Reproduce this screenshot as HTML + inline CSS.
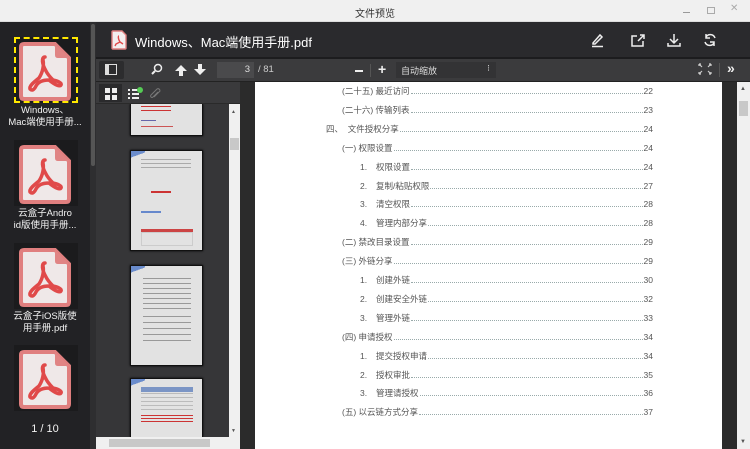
<!DOCTYPE html>
<html><head><meta charset="utf-8">
<style>
*{margin:0;padding:0;box-sizing:border-box}
body{width:750px;height:449px;overflow:hidden;background:#2a2a2c;font-family:"Liberation Sans","Noto Sans CJK SC",sans-serif;position:relative}
.a{position:absolute}
.row{position:absolute;display:flex;align-items:flex-end;font-size:8.5px;color:#555;white-space:nowrap;line-height:10px;height:10px}
.row .d{flex:1;border-bottom:1px dotted #9aa;margin:0 1px 2px 1px;height:1px}
.lbl{position:absolute;width:90px;left:0;text-align:center;color:#f2f2f2;font-size:9.5px;line-height:11.5px}
.pg{position:absolute;left:130px;width:73px;background:#e2e2e2;border:1px solid #111;box-shadow:0 0 2px #000;overflow:hidden}
.tile{position:absolute;left:14px;width:64px;height:66px;background:#1b1b1d}
</style></head><body>
<div class="a" style="left:0;top:0;width:750px;height:22px;background:#f0f0f0;border-bottom:1px solid #ddd"></div>
<div class="a" style="left:0;top:5px;width:750px;text-align:center;font-size:10px;color:#333">文件预览</div>
<div class="a" style="left:683px;top:12px;width:7px;height:1px;background:#999"></div>
<div class="a" style="left:707px;top:7px;width:8px;height:7px;border:1px solid #aaa"></div>
<div class="a" style="left:730px;top:3px;font-size:10px;color:#aaa">✕</div>

<div class="a" style="left:0;top:22px;width:90px;height:427px;background:#222225"></div>
<div class="a" style="left:90px;top:22px;width:6px;height:427px;background:#2e2e30"></div>
<div class="a" style="left:91px;top:24px;width:4px;height:142px;background:#555;border-radius:2px"></div>

<div class="tile" style="top:37px;border:2px dashed #ffe800"></div>
<div class="tile" style="top:140px"></div>
<div class="tile" style="top:243px"></div>
<div class="tile" style="top:345px"></div>

<svg class="a" style="left:0;top:0" width="90" height="449">
<defs><g id="fi">
<path d="M3 5 Q3 2 6 2 H37 L51 16 V54 Q51 57 48 57 H6 Q3 57 3 54 Z" fill="#efe8e8" stroke="#e07f7f" stroke-width="4"/>
<path d="M37 2 V13 Q37 16 40 16 H51 Z" fill="#e08484"/>
<path d="M27 15 C23 15 24 22 28 29 C30 33 32 35 35 38 C40 39 44 41 43 43 C42 45 37 43 31 38 C25 38 20 40 18 44 C16 48 14 49 12 47 C11 44 16 40 21 36 C25 30 26 23 25 18 C25 16 26 15 27 15 Z" fill="none" stroke="#e04a4a" stroke-width="3.5" stroke-linejoin="round"/>
</g></defs>
<use href="#fi" x="18" y="42"/>
<use href="#fi" x="18" y="145"/>
<use href="#fi" x="18" y="248"/>
<use href="#fi" x="18" y="350"/>
</svg>
<div class="lbl" style="top:105px">Windows、<br>Mac端使用手册...</div>
<div class="lbl" style="top:208px">云盒子Andro<br>id版使用手册...</div>
<div class="lbl" style="top:311px">云盒子iOS版使<br>用手册.pdf</div>
<div class="lbl" style="top:424px;font-size:11px">1 / 10</div>

<div class="a" style="left:96px;top:22px;width:654px;height:37px;background:#2a2a2d;border-bottom:2px solid #1c1c1e"></div>
<svg class="a" style="left:111px;top:30px" width="16" height="20"><path d="M1 2 Q1 1 2 1 H11 L15 5 V18 Q15 19 14 19 H2 Q1 19 1 18Z" fill="#f3eeee" stroke="#e07f7f" stroke-width="1.4"/><path d="M8 6 C7 6 7 9 9 12 L12 14 M9 12 L5 14 L4 16" fill="none" stroke="#e04a4a" stroke-width="1.4"/></svg>
<div class="a" style="left:135px;top:32px;font-size:13px;color:#fff">Windows、Mac端使用手册.pdf</div>
<svg class="a" style="left:590px;top:32px" width="130" height="16" fill="none" stroke="#eee" stroke-width="1.5">
<path d="M3 11 L10 3 L12 5 L5 12 H3Z M2 14.5 H13"/>
<path d="M47 4 H42 V14 H53 V9 M48 9 L54 3 M50 3 H54 V7"/>
<path d="M84 2 V10 M80 7 L84 11 L88 7 M78 11 V14 H90 V11"/>
<path d="M125 6 A5 5 0 0 0 116 5 M115 10 A5 5 0 0 0 124 11 M116 2 V6 H120 M124 14 V10 H120"/>
</svg>

<div class="a" style="left:96px;top:59px;width:654px;height:23px;background:#3b3b3d;border-bottom:1px solid #222"></div>
<div class="a" style="left:99px;top:61px;width:25px;height:18px;background:#2c2c2e;border-radius:2px"></div>
<div class="a" style="left:105px;top:64px;width:12px;height:11px;border:1.5px solid #ddd;border-left-width:4px"></div>
<svg class="a" style="left:150px;top:62px" width="70" height="16" fill="#eee" stroke="#eee">
<circle cx="8" cy="6" r="3.5" fill="none" stroke-width="1.5"/><path d="M5 9 L2 12" stroke-width="2"/>
<path d="M31 3 L25 9 H29 V14 H33 V9 H37Z" stroke="none"/>
<path d="M50 13 L44 7 H48 V2 H52 V7 H56Z" stroke="none"/>
</svg>
<div class="a" style="left:217px;top:62px;width:37px;height:16px;background:#4a4a4c;color:#ddd;font-size:9.5px;text-align:right;padding:2px 4px 0 0">3</div>
<div class="a" style="left:258px;top:64px;color:#ccc;font-size:9.5px">/ 81</div>
<div class="a" style="left:355px;top:70px;width:8px;height:1.5px;background:#eee"></div>
<div class="a" style="left:370px;top:64px;width:1px;height:13px;background:#555"></div>
<div class="a" style="left:378px;top:61px;color:#eee;font-size:14px;font-weight:bold;line-height:16px">+</div>
<div class="a" style="left:396px;top:62px;width:100px;height:16px;background:#333335;color:#ddd;font-size:9px;padding:2px 5px">自动缩放<span style="position:absolute;right:6px;top:1px">⁝</span></div>
<svg class="a" style="left:698px;top:63px" width="14" height="12" stroke="#ccc" stroke-width="1.2" fill="none"><path d="M1 1 L4 4 M1 1 V3 M1 1 H3 M13 1 L10 4 M13 1 V3 M13 1 H11 M1 11 L4 8 M1 11 V9 M1 11 H3 M13 11 L10 8 M13 11 V9 M13 11 H11"/></svg>
<div class="a" style="left:719px;top:63px;width:1px;height:14px;background:#555"></div>
<div class="a" style="left:727px;top:60px;color:#eee;font-size:14px;font-weight:bold">»</div>

<div class="a" style="left:96px;top:82px;width:144px;height:367px;background:#363638"></div>

<div class="pg" style="top:104px;height:32px;border-top:none"><div class="a" style="left:10px;top:2px;width:30px;height:1px;background:#c33"></div><div class="a" style="left:10px;top:6px;width:30px;height:1px;background:#c33"></div><div class="a" style="left:10px;top:16px;width:15px;height:1px;background:#66a"></div><div class="a" style="left:10px;top:22px;width:32px;height:1px;background:#c55"></div></div>
<div class="pg" style="top:150px;height:101px"><div class="a" style="left:0;top:0;width:14px;height:8px;background:linear-gradient(160deg,#6a8ccc 50%,transparent 50%)"></div><div class="a" style="left:10px;top:8px;width:50px;height:10px;background:repeating-linear-gradient(#aaa 0 1px,transparent 1px 4px)"></div><div class="a" style="left:20px;top:40px;width:20px;height:2px;background:#c33"></div><div class="a" style="left:10px;top:60px;width:20px;height:2px;background:#68c"></div><div class="a" style="left:10px;top:78px;width:52px;height:3px;background:#c44"></div><div class="a" style="left:10px;top:81px;width:52px;height:14px;border:1px solid #ccc"></div></div>
<div class="pg" style="top:265px;height:101px"><div class="a" style="left:0;top:0;width:14px;height:8px;background:linear-gradient(160deg,#6a8ccc 50%,transparent 50%)"></div><div class="a" style="left:12px;top:12px;width:48px;height:32px;background:repeating-linear-gradient(#999 0 1px,transparent 1px 5px)"></div><div class="a" style="left:12px;top:50px;width:48px;height:28px;background:repeating-linear-gradient(#999 0 1px,transparent 1px 6px)"></div></div>
<div class="pg" style="top:378px;height:59px;border-bottom:none"><div class="a" style="left:0;top:0;width:14px;height:8px;background:linear-gradient(160deg,#6a8ccc 50%,transparent 50%)"></div><div class="a" style="left:10px;top:8px;width:52px;height:5px;background:#7b95c5"></div><div class="a" style="left:10px;top:14px;width:52px;height:18px;background:repeating-linear-gradient(#bbb 0 1px,transparent 1px 4px)"></div><div class="a" style="left:10px;top:36px;width:52px;height:8px;background:repeating-linear-gradient(#c33 0 1px,transparent 1px 3px)"></div></div>

<div class="a" style="left:96px;top:82px;width:144px;height:22px;background:#3a3a3c;border-bottom:1px solid #2a2a2a"></div>
<div class="a" style="left:99px;top:84px;width:23px;height:18px;background:#2a2a2c"></div>
<svg class="a" style="left:104px;top:87px" width="60" height="13" fill="#eee"><rect x="1" y="1" width="5" height="5"/><rect x="8" y="1" width="5" height="5"/><rect x="1" y="8" width="5" height="5"/><rect x="8" y="8" width="5" height="5"/>
<rect x="24" y="2" width="2" height="2"/><rect x="28" y="2" width="7" height="2"/><rect x="24" y="6" width="2" height="2"/><rect x="28" y="6" width="7" height="2"/><rect x="24" y="10" width="2" height="2"/><rect x="28" y="10" width="7" height="2"/>
<circle cx="36" cy="3" r="3" fill="#5c5"/>
<path d="M50 10 L56 4 A2 2 0 0 0 53 2 L47 8 A1.2 1.2 0 0 0 49 10 L54 5" fill="none" stroke="#777" stroke-width="1"/></svg>

<div class="a" style="left:229px;top:104px;width:11px;height:333px;background:#f0f0f0"></div>
<div class="a" style="left:231px;top:109px;font-size:5px;color:#555">▲</div>
<div class="a" style="left:230px;top:138px;width:9px;height:12px;background:#c8c8c8"></div>
<div class="a" style="left:231px;top:428px;font-size:5px;color:#555">▼</div>
<div class="a" style="left:96px;top:437px;width:144px;height:12px;background:#f0f0f0"></div>
<div class="a" style="left:109px;top:439px;width:101px;height:8px;background:#c8c8c8"></div>

<div class="a" style="left:240px;top:82px;width:497px;height:367px;background:#2b2b2b"></div>
<div class="a" style="left:255px;top:82px;width:467px;height:367px;background:#fff"></div>
<div class="a" style="left:737px;top:82px;width:13px;height:367px;background:#f0f0f0"></div>
<div class="a" style="left:740px;top:86px;font-size:6px;color:#555">▲</div>
<div class="a" style="left:739px;top:101px;width:9px;height:15px;background:#c8c8c8"></div>
<div class="a" style="left:740px;top:439px;font-size:6px;color:#555">▼</div>

<div id="toc"></div>
<script>
var rows=[[342,0,"(二十五) 最近访问","22"],[342,0,"(二十六) 传输列表","23"],[326,0,"四、&nbsp;&nbsp;文件授权分享","24"],[342,0,"(一) 权限设置","24"],[360,"1.","权限设置","24"],[360,"2.","复制/粘贴权限","27"],[360,"3.","清空权限","28"],[360,"4.","管理内部分享","28"],[342,0,"(二) 禁改目录设置","29"],[342,0,"(三) 外链分享","29"],[360,"1.","创建外链","30"],[360,"2.","创建安全外链","32"],[360,"3.","管理外链","33"],[342,0,"(四) 申请授权","34"],[360,"1.","提交授权申请","34"],[360,"2.","授权审批","35"],[360,"3.","管理请授权","36"],[342,0,"(五) 以云链方式分享","37"]];
var h="";
rows.forEach(function(r,i){var y=86+i*18.9;var x=r[0];
if(r[1]){h+='<div class="row" style="left:'+x+'px;top:'+y+'px">'+r[1]+'</div>';x=376;}
h+='<div class="row" style="left:'+x+'px;top:'+y+'px;width:'+(653-x)+'px"><span>'+r[2]+'</span><span class="d"></span><span>'+r[3]+'</span></div>';});
document.getElementById("toc").innerHTML=h;
</script>
</body></html>
